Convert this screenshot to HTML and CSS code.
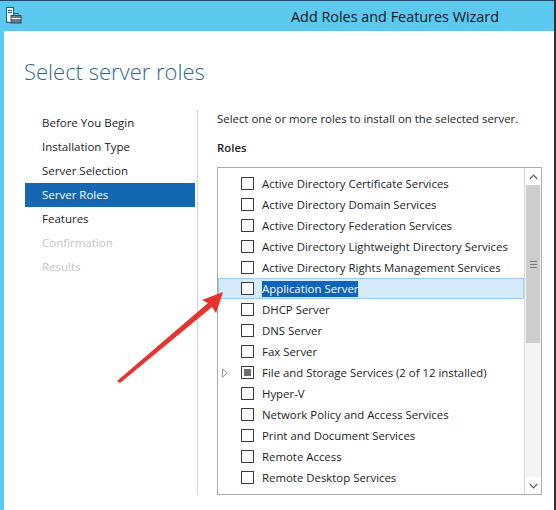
FILE: index.html
```html
<!DOCTYPE html>
<html>
<head>
<meta charset="utf-8">
<link rel="stylesheet" href="styles.css">
</head>
<body>
<div class="window">
  <div class="titlebar">
    <svg class="app-icon" width="16" height="17" viewBox="0 0 16 17">
      <rect x="0.5" y="0.5" width="7" height="15" fill="#ffffff" stroke="#1f5c8c"/>
      <rect x="2" y="3" width="4" height="1" fill="#1f5c8c"/>
      <rect x="2" y="5" width="4" height="1" fill="#1f5c8c"/>
      <rect x="5" y="8.5" width="10" height="7.5" fill="#6b7a88" stroke="#2a4d6b"/>
      <rect x="8" y="6.5" width="4" height="2" fill="none" stroke="#2a4d6b"/>
      <rect x="5.5" y="11" width="9" height="1" fill="#ffffff"/>
    </svg>
    <div class="title">Add Roles and Features Wizard</div>
  </div>
  <div class="client">
    <h1 class="heading">Select server roles</h1>
    <div class="body">
      <nav class="steps">
        <div class="step">Before You Begin</div>
        <div class="step">Installation Type</div>
        <div class="step">Server Selection</div>
        <div class="step current">Server Roles</div>
        <div class="step">Features</div>
        <div class="step disabled">Confirmation</div>
        <div class="step disabled">Results</div>
      </nav>
      <main class="content">
        <p class="intro">Select one or more roles to install on the selected server.</p>
        <div class="label">Roles</div>
        <div class="listbox">
          <ul class="roles">
            <li class="role"><span class="expander"></span><span class="cb"></span><span class="name">Active Directory Certificate Services</span></li>
            <li class="role"><span class="expander"></span><span class="cb"></span><span class="name">Active Directory Domain Services</span></li>
            <li class="role"><span class="expander"></span><span class="cb"></span><span class="name">Active Directory Federation Services</span></li>
            <li class="role"><span class="expander"></span><span class="cb"></span><span class="name">Active Directory Lightweight Directory Services</span></li>
            <li class="role"><span class="expander"></span><span class="cb"></span><span class="name">Active Directory Rights Management Services</span></li>
            <li class="role hover"><span class="expander"></span><span class="cb"></span><span class="name selected">Application Server</span></li>
            <li class="role"><span class="expander"></span><span class="cb"></span><span class="name">DHCP Server</span></li>
            <li class="role"><span class="expander"></span><span class="cb"></span><span class="name">DNS Server</span></li>
            <li class="role"><span class="expander"></span><span class="cb"></span><span class="name">Fax Server</span></li>
            <li class="role"><span class="expander"><svg width="6" height="10" viewBox="0 0 6 10"><path d="M0.5 0.8 L5.2 5 L0.5 9.2 Z" fill="none" stroke="#9a9a9a"/></svg></span><span class="cb partial"></span><span class="name">File and Storage Services (2 of 12 installed)</span></li>
            <li class="role"><span class="expander"></span><span class="cb"></span><span class="name">Hyper-V</span></li>
            <li class="role"><span class="expander"></span><span class="cb"></span><span class="name">Network Policy and Access Services</span></li>
            <li class="role"><span class="expander"></span><span class="cb"></span><span class="name">Print and Document Services</span></li>
            <li class="role"><span class="expander"></span><span class="cb"></span><span class="name">Remote Access</span></li>
            <li class="role"><span class="expander"></span><span class="cb"></span><span class="name">Remote Desktop Services</span></li>
          </ul>
          <div class="scrollbar">
            <div class="sb-btn"><svg width="9" height="6" viewBox="0 0 9 6"><path d="M0.8 5 L4.5 1.2 L8.2 5" fill="none" stroke="#606060" stroke-width="1.2"/></svg></div>
            <div class="sb-track">
              <div class="sb-thumb"><svg width="7" height="7" viewBox="0 0 7 7"><rect x="0" y="0" width="7" height="1" fill="#7a7a7a"/><rect x="0" y="3" width="7" height="1" fill="#7a7a7a"/><rect x="0" y="6" width="7" height="1" fill="#7a7a7a"/></svg></div>
            </div>
            <div class="sb-btn"><svg width="9" height="6" viewBox="0 0 9 6"><path d="M0.8 1 L4.5 4.8 L8.2 1" fill="none" stroke="#606060" stroke-width="1.2"/></svg></div>
          </div>
        </div>
      </main>
    </div>
  </div>
  <svg class="annotation" width="556" height="510" viewBox="0 0 556 510">
    <polygon points="117,381 208,303 202,300 223,292 216,313 212,307 120,383" fill="#e8322d"/>
  </svg>
</div>
</body>
</html>
```

FILE: styles.css
```css
html, body {
  margin: 0;
  padding: 0;
}
body {
  width: 556px;
  height: 510px;
  overflow: hidden;
  background: #ffffff;
  font-family: "Segoe UI", "Open Sans", "Noto Sans", sans-serif;
  color: #1e1e1e;
}
.window {
  position: relative;
  width: 556px;
  height: 510px;
  box-sizing: border-box;
  border-right: 2px solid #2f2f2f;
  display: flex;
  flex-direction: column;
}
.titlebar {
  height: 30px;
  flex: none;
  background: #5bc9ef;
  border-top: 1px solid #1f4a68;
  display: flex;
  align-items: center;
  padding-left: 6px;
}
.app-icon {
  display: block;
  margin-top: -1px;
}
.title {
  margin-left: 269px;
  font-size: 14.4px;
  color: #141414;
  white-space: nowrap;
}
.client {
  flex: 1;
  display: flex;
  flex-direction: column;
  border-left: 4px solid #5bc9ef;
  background: #ffffff;
  min-height: 0;
}
.heading {
  margin: 0;
  padding: 25px 0 0 20px;
  font-size: 22px;
  line-height: 30px;
  font-weight: 300;
  color: #2f6a8b;
  white-space: nowrap;
}
.body {
  flex: 1;
  display: flex;
  margin-top: 24px;
  margin-bottom: 15px;
  min-height: 0;
}
.steps {
  width: 193px;
  flex: none;
  border-right: 1px solid #d4d4d4;
  padding-top: 1px;
  font-size: 11.5px;
}
.step {
  margin-left: 21px;
  width: 170px;
  height: 24px;
  line-height: 24px;
  padding-left: 17px;
  box-sizing: border-box;
  color: #1e1e1e;
  white-space: nowrap;
}
.step.current {
  background: #1468b3;
  color: #ffffff;
}
.step.disabled {
  color: #c4c4c4;
}
.content {
  flex: 1;
  padding-left: 19px;
  display: flex;
  flex-direction: column;
  font-size: 11.4px;
  min-height: 0;
}
.intro {
  margin: 0;
  padding-top: 1px;
  line-height: 16px;
  white-space: nowrap;
}
.label {
  margin-top: 13px;
  line-height: 16px;
  font-weight: 600;
}
.listbox {
  margin-top: 11px;
  width: 325px;
  flex: 1;
  box-sizing: border-box;
  border: 1px solid #acacac;
  display: flex;
  min-height: 0;
}
.roles {
  flex: 1;
  margin: 0;
  padding: 5px 0 0 0;
  list-style: none;
  overflow: hidden;
}
.role {
  height: 21px;
  display: flex;
  align-items: center;
  padding-left: 4px;
  box-sizing: border-box;
  white-space: nowrap;
}
.role.hover {
  background: #d5eafb;
  border: 1px solid #9dcaf0;
  padding-left: 3px;
}
.expander {
  width: 8px;
  height: 10px;
  flex: none;
  display: flex;
  align-items: center;
}
.expander svg {
  display: block;
}
.cb {
  width: 13px;
  height: 13px;
  box-sizing: border-box;
  border: 1px solid #3c3c3c;
  background: #ffffff;
  margin-left: 11px;
  flex: none;
  display: flex;
  align-items: center;
  justify-content: center;
}
.cb.partial::after {
  content: "";
  width: 7px;
  height: 7px;
  background: #6e6e6e;
}
.name {
  margin-left: 8px;
  line-height: 16px;
  color: #1e1e1e;
}
.name.selected {
  background: #0f63bd;
  color: #ffffff;
}
.scrollbar {
  width: 17px;
  flex: none;
  display: flex;
  flex-direction: column;
  border-left: 1px solid #dadada;
  box-sizing: border-box;
  background: #f4f4f4;
}
.sb-btn {
  height: 17px;
  flex: none;
  background: #ffffff;
  display: flex;
  align-items: center;
  justify-content: center;
}
.sb-btn svg {
  display: block;
}
.sb-track {
  flex: 1;
  padding: 0 1px;
}
.sb-thumb {
  height: 158px;
  background: #cdcdcd;
  display: flex;
  align-items: center;
  justify-content: center;
}
.sb-thumb svg {
  display: block;
}
.annotation {
  position: absolute;
  left: 0;
  top: 0;
  pointer-events: none;
}
```
